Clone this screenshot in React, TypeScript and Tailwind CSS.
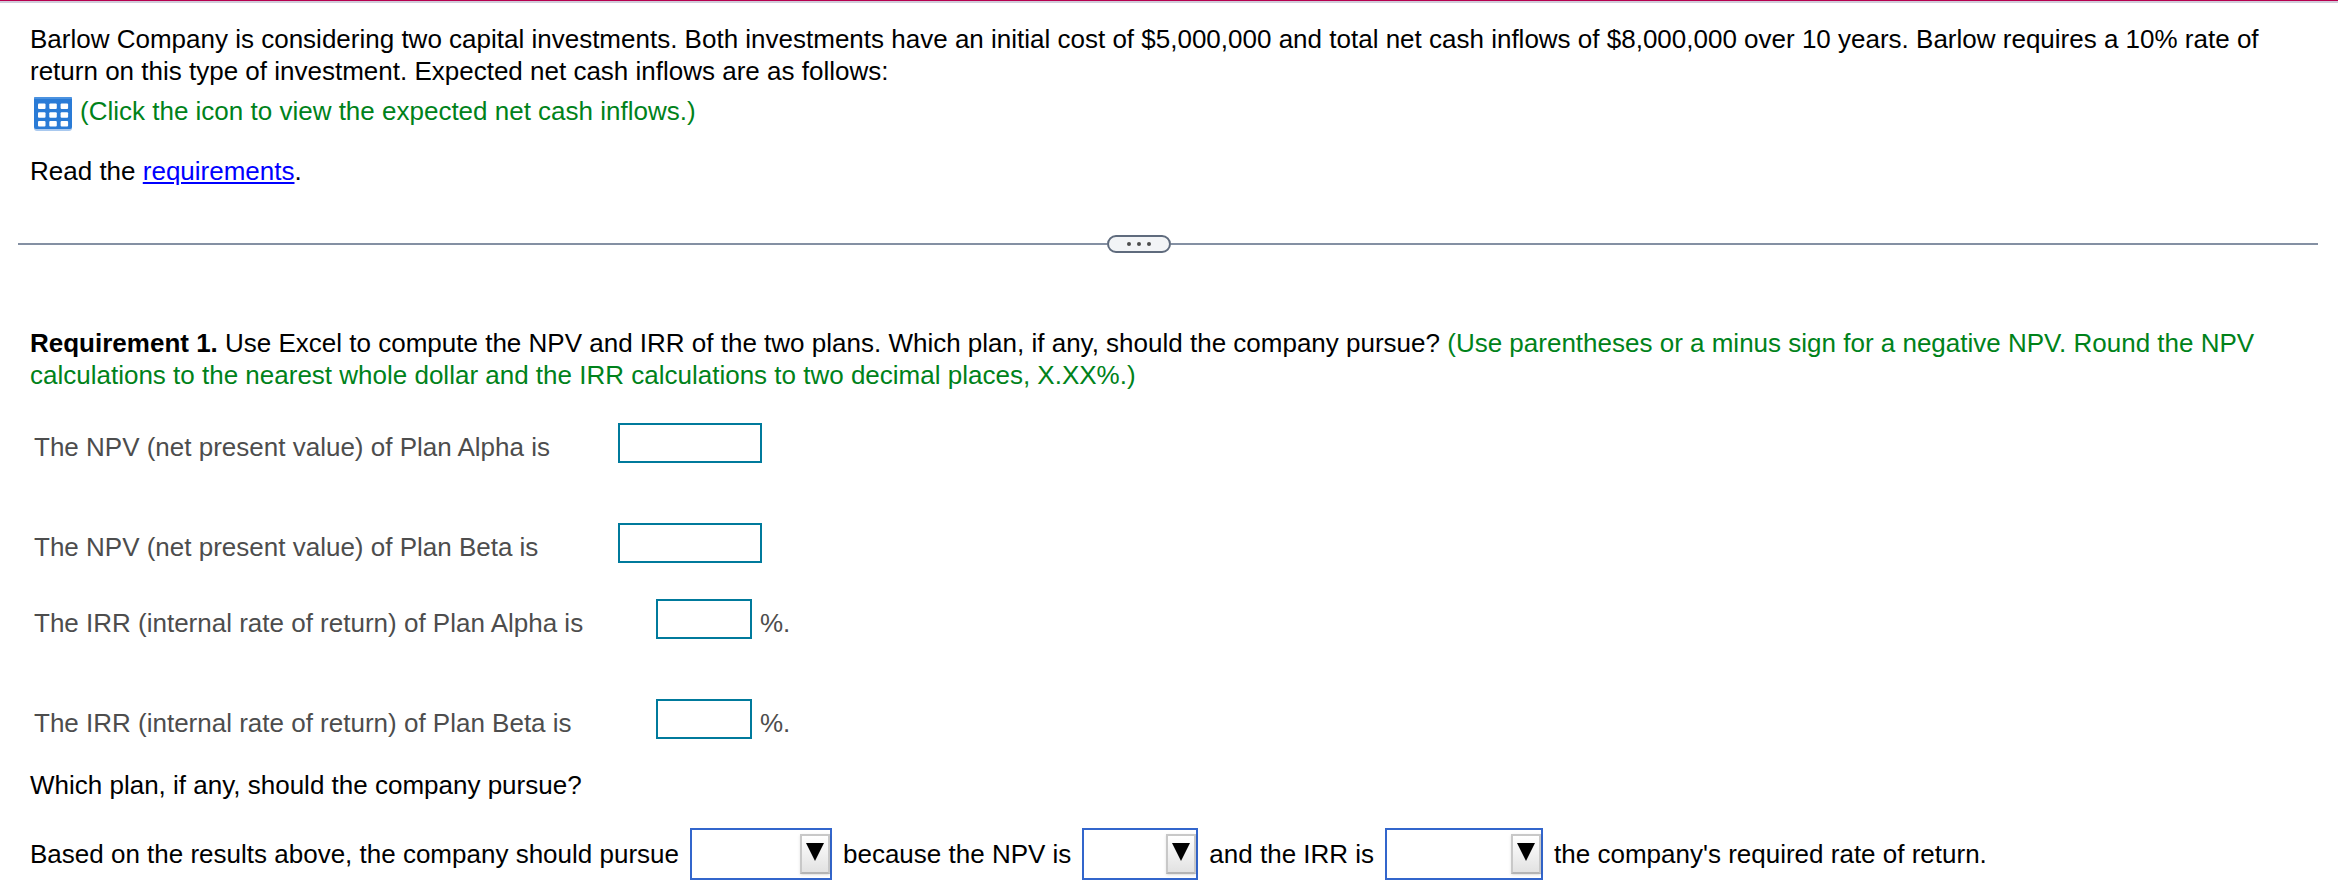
import React from 'react';

type AnswerFieldProps = {
  id: string;
  label: string;
  percent?: boolean;
};

const TableIcon = () => (
  <svg width="38" height="34" viewBox="0 0 38 34" aria-hidden="true">
    <rect x="0" y="2" width="38" height="32" rx="3" fill="#a9c9ef" />
    <rect x="0" y="0" width="38" height="32" rx="2" fill="#2a7bd6" />
    <rect x="0" y="0" width="38" height="2" rx="1" fill="#4b92e0" />
    {[6.5, 15.2, 23.9].map((y) =>
      [4, 15.3, 26.6].map((x) => (
        <rect key={`${x}-${y}`} x={x} y={y} width="7.5" height="5.5" rx="1" fill="#fff" />
      ))
    )}
  </svg>
);

const AnswerField = ({ id, label, percent }: AnswerFieldProps) => (
  <div className="flex items-end text-[#4d4d4d]">
    <label htmlFor={id} className={percent ? 'w-[622px]' : 'w-[584px]'}>
      {label}
    </label>
    <input
      id={id}
      type="text"
      className={`h-10 border-2 border-[#007a9c] bg-white px-2 outline-none ${
        percent ? 'w-24' : 'w-36'
      }`}
    />
    {percent && <span className="ml-2">%.</span>}
  </div>
);

const Dropdown = ({ id, width, options }: { id: string; width: string; options: string[] }) => (
  <div className={`relative h-[52px] ${width}`}>
    <select
      id={id}
      defaultValue=""
      className="h-full w-full appearance-none border-2 border-[#3366cc] bg-white pl-2 pr-8 outline-none"
    >
      <option value="" />
      {options.map((option) => (
        <option key={option}>{option}</option>
      ))}
    </select>
    <span className="pointer-events-none absolute top-1.5 right-0.5 flex h-10 w-[30px] justify-center border-2 border-[#c8c8c8] border-b-[#b4b4b4] bg-linear-to-b from-white to-[#e2e2e2] pt-[7px] shadow-sm">
      <svg width="18" height="18" viewBox="0 0 18 18" aria-hidden="true">
        <path d="M0 0h18L9 18z" fill="#000" />
      </svg>
    </span>
  </div>
);

const Problem = () => (
  <section className="px-[30px] pt-5">
    <p>
      Barlow Company is considering two capital investments. Both investments have an initial cost
      of $5,000,000 and total net cash inflows of $8,000,000 over 10 years. Barlow requires a 10%
      rate of return on this type of investment. Expected net cash inflows are as follows:
    </p>
    <button type="button" className="mt-2 flex h-8 gap-2 pl-1 text-[#00821a]">
      <span className="pt-0.5">
        <TableIcon />
      </span>
      (Click the icon to view the expected net cash inflows.)
    </button>
    <p className="mt-7">
      Read the{' '}
      <a href="#requirements" className="text-[#0000ff] underline">
        requirements
      </a>
      .
    </p>
  </section>
);

// the handle sits slightly left of centre
const Divider = () => (
  <div className="mt-12 flex items-center pr-5 pl-[18px]">
    <div className="h-0.5 flex-[19] bg-[#8490a3]" />
    <button
      type="button"
      aria-label="Resize panels"
      className="flex h-[18px] w-16 items-center justify-center gap-1.5 rounded-full border-2 border-[#5f6b7d] bg-[#f2f4f6]"
    >
      <span className="size-1 rounded-full bg-[#4d4d4d]" />
      <span className="size-1 rounded-full bg-[#4d4d4d]" />
      <span className="size-1 rounded-full bg-[#4d4d4d]" />
    </button>
    <div className="h-0.5 flex-[20] bg-[#8490a3]" />
  </div>
);

const Requirement = () => (
  <section className="px-[30px] pt-[74px]">
    <p>
      <b>Requirement 1.</b> Use Excel to compute the NPV and IRR of the two plans. Which plan, if
      any, should the company pursue?{' '}
      <span className="text-[#00821a]">
        (Use parentheses or a minus sign for a negative NPV. Round the NPV calculations to the
        nearest whole dollar and the IRR calculations to two decimal places, X.XX%.)
      </span>
    </p>
    <div className="mt-8 flex flex-col gap-[60px] pl-1">
      <AnswerField id="npv-alpha" label="The NPV (net present value) of Plan Alpha is" />
      <AnswerField id="npv-beta" label="The NPV (net present value) of Plan Beta is" />
    </div>
    <div className="mt-9 flex flex-col gap-[60px] pl-1">
      <AnswerField id="irr-alpha" label="The IRR (internal rate of return) of Plan Alpha is" percent />
      <AnswerField id="irr-beta" label="The IRR (internal rate of return) of Plan Beta is" percent />
    </div>
    <p className="mt-[30px]">Which plan, if any, should the company pursue?</p>
    <div className="mt-[27px] flex flex-wrap items-center gap-[11px]">
      <label htmlFor="plan">Based on the results above, the company should pursue</label>
      <Dropdown id="plan" width="w-[142px]" options={['Plan Alpha', 'Plan Beta']} />
      <label htmlFor="npv-sign">because the NPV is</label>
      <Dropdown id="npv-sign" width="w-[116px]" options={['positive', 'negative']} />
      <label htmlFor="irr-compare">and the IRR is</label>
      <Dropdown id="irr-compare" width="w-[158px]" options={['greater than', 'less than']} />
      <span>the company's required rate of return.</span>
    </div>
  </section>
);

const App = () => (
  <main className="border-t border-[#b8004e] bg-white font-['Liberation_Sans',Arial,sans-serif] text-[26px] leading-8 text-black">
    <div className="h-0.5 bg-[#d0ccda]" />
    <Problem />
    <Divider />
    <Requirement />
  </main>
);

export default App;
